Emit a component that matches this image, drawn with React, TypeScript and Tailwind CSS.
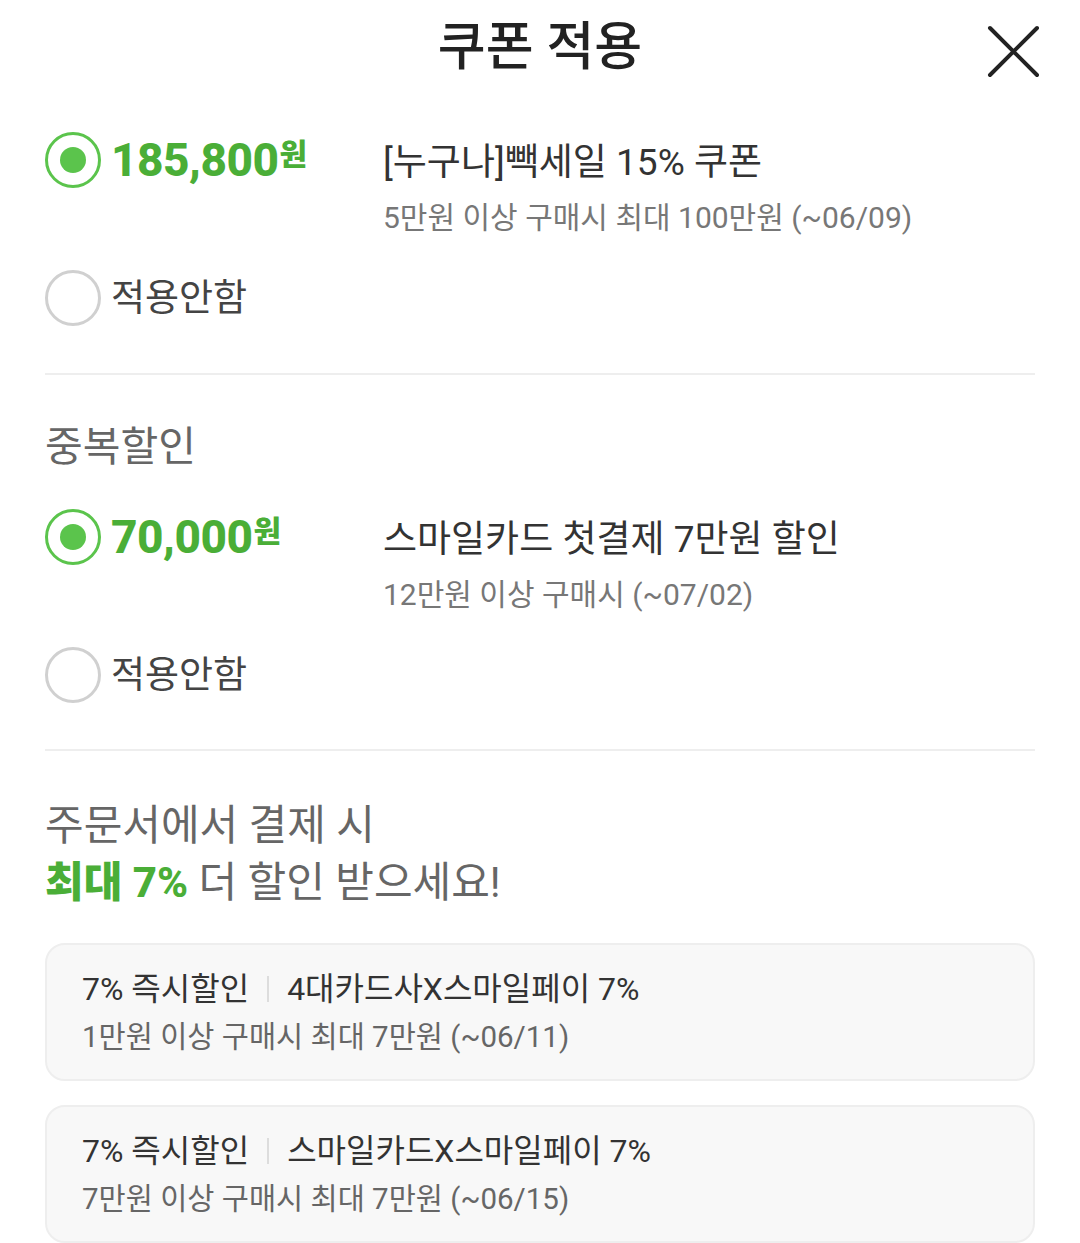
import React from "react";

const FONT = "font-['Roboto','Noto_Sans_CJK_KR',sans-serif]";

function Radio({ checked }: { checked: boolean }) {
  return checked ? (
    <div className="w-[56px] h-[56px] shrink-0 rounded-full border-[3px] border-[#5bc44c] flex items-center justify-center bg-white">
      <div className="w-[26px] h-[26px] rounded-full bg-[#5bc44c]" />
    </div>
  ) : (
    <div className="w-[56px] h-[56px] shrink-0 rounded-full border-[3px] border-[#d0d0d0] bg-white" />
  );
}

function CouponRow({
  amount,
  title,
  sub,
}: {
  amount: string;
  title: string;
  sub: string;
}) {
  return (
    <div className="flex items-start">
      <div className="w-[338px] h-[56px] flex items-center gap-[10px] shrink-0">
        <Radio checked />
        <span className="text-[#4aae37] font-extrabold text-[46px] leading-none tracking-[-0.5px]">
          {amount}
          <span className="text-[30px] align-top relative top-[3px] ml-[1px]">원</span>
        </span>
      </div>
      <div className="flex flex-col">
        <div className="h-[56px] pt-[5px] flex items-center text-[37px] text-[#333]">{title}</div>
        <div className="h-[40px] mt-[9px] flex items-center text-[30px] text-[#777]">{sub}</div>
      </div>
    </div>
  );
}

function NoneRow() {
  return (
    <div className="flex items-center gap-[10px] h-[56px]">
      <Radio checked={false} />
      <span className="text-[37px] text-[#444] relative top-[1px]">적용안함</span>
    </div>
  );
}

function Card({ label, name, sub }: { label: string; name: string; sub: string }) {
  return (
    <div className="rounded-[20px] border-2 border-[#eeeeee] bg-[#f8f8f8] h-[138px] px-[35px] pt-[22px]">
      <div className="h-[44px] flex items-center text-[32px] text-[#333]">
        <span>{label}</span>
        <span className="w-[2px] h-[26px] bg-[#dddddd] mx-[18px]" />
        <span>{name}</span>
      </div>
      <div className="h-[44px] mt-[4px] flex items-center text-[29.5px] text-[#666]">{sub}</div>
    </div>
  );
}

export default function App() {
  return (
    <div className={`w-[1080px] h-[1243px] overflow-hidden bg-white ${FONT}`}>
      <div className="relative h-[96px] flex items-center justify-center">
        <h1 className="text-[52px] font-medium text-[#222] leading-none">쿠폰 적용</h1>
        <button className="absolute left-[986px] top-[24px] w-[56px] h-[56px]">
          <svg viewBox="0 0 56 56" width="56" height="56">
            <path d="M4 4 L51 51 M51 4 L4 51" stroke="#222" strokeWidth="4" strokeLinecap="round" fill="none" />
          </svg>
        </button>
      </div>
      <div className="px-[45px]">
        <div className="pt-[36px]">
          <CouponRow amount="185,800" title="[누구나]빽세일 15% 쿠폰" sub="5만원 이상 구매시 최대 100만원 (~06/09)" />
          <div className="mt-[33px]">
            <NoneRow />
          </div>
        </div>
        <div className="mt-[47px] h-[2px] bg-[#eeeeee]" />
        <div className="mt-[48px] h-[50px] flex items-center text-[41px] text-[#666]">중복할인</div>
        <div className="mt-[36px]">
          <CouponRow amount="70,000" title="스마일카드 첫결제 7만원 할인" sub="12만원 이상 구매시 (~07/02)" />
          <div className="mt-[33px]">
            <NoneRow />
          </div>
        </div>
        <div className="mt-[46px] h-[2px] bg-[#eeeeee]" />
        <div className="mt-[46px] text-[42px] leading-[57px] text-[#666]">
          <div>주문서에서 결제 시</div>
          <div>
            <span className="font-extrabold text-[#4aae37]">최대 7%</span> 더 할인 받으세요!
          </div>
        </div>
        <div className="mt-[32px] flex flex-col gap-[24px]">
          <Card label="7% 즉시할인" name="4대카드사X스마일페이 7%" sub="1만원 이상 구매시 최대 7만원 (~06/11)" />
          <Card label="7% 즉시할인" name="스마일카드X스마일페이 7%" sub="7만원 이상 구매시 최대 7만원 (~06/15)" />
        </div>
      </div>
    </div>
  );
}
